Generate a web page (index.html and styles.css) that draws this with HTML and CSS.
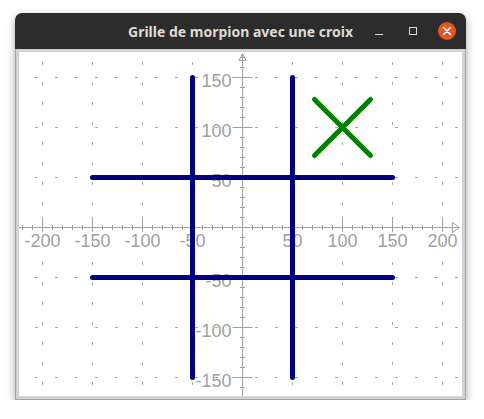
FILE: index.html
```html
<!DOCTYPE html>
<html>
<head>
<meta charset="utf-8">
<link rel="stylesheet" href="styles.css">
</head>
<body>
<div class="window">
  <div class="titlebar">
    <div class="spacer"></div>
    <div class="title">Grille de morpion avec une croix</div>
    <div class="controls">
      <span class="btn-min"></span>
      <span class="btn-max"></span>
      <span class="btn-close">
        <svg width="18" height="18" viewBox="0 0 18 18"><circle cx="9" cy="9" r="9" fill="#e95420"/><path d="M5.5 5.5 L12.5 12.5 M12.5 5.5 L5.5 12.5" stroke="#fff" stroke-width="1.6" stroke-linecap="round"/></svg>
      </span>
    </div>
  </div>
  <div class="frame">
    <div class="inner">
      <svg class="canvas" width="443" height="344" viewBox="19 52 443 344">
        <g class="grid" stroke="#a6a6a6" stroke-width="1" fill="none">
          <g stroke-dasharray="3 17">
            <line x1="35" y1="77.5" x2="462" y2="77.5"/>
            <line x1="35" y1="127.5" x2="462" y2="127.5"/>
            <line x1="35" y1="177.5" x2="462" y2="177.5"/>
            <line x1="35" y1="277.5" x2="462" y2="277.5"/>
            <line x1="35" y1="327.5" x2="462" y2="327.5"/>
            <line x1="35" y1="377.5" x2="462" y2="377.5"/>
            <line x1="42.5" y1="62" x2="42.5" y2="396"/>
            <line x1="92.5" y1="62" x2="92.5" y2="396"/>
            <line x1="142.5" y1="62" x2="142.5" y2="396"/>
            <line x1="192.5" y1="62" x2="192.5" y2="396"/>
            <line x1="292.5" y1="62" x2="292.5" y2="396"/>
            <line x1="342.5" y1="62" x2="342.5" y2="396"/>
            <line x1="392.5" y1="62" x2="392.5" y2="396"/>
            <line x1="442.5" y1="62" x2="442.5" y2="396"/>
          </g>
        </g>
        <g class="axes" stroke="#a0a0a0" stroke-width="1" fill="none">
          <line x1="19" y1="227.5" x2="459" y2="227.5"/>
          <line x1="242.5" y1="54" x2="242.5" y2="396"/>
          <polygon points="452.5,222.5 459.5,227.5 452.5,232.5"/>
          <polygon points="239,60.5 242.5,53.5 246,60.5"/>
          <path d="M22.5 225V230M32.5 225V230M52.5 225V230M62.5 225V230M72.5 225V230M82.5 225V230M102.5 225V230M112.5 225V230M122.5 225V230M132.5 225V230M152.5 225V230M162.5 225V230M172.5 225V230M182.5 225V230M202.5 225V230M212.5 225V230M222.5 225V230M232.5 225V230M252.5 225V230M262.5 225V230M272.5 225V230M282.5 225V230M302.5 225V230M312.5 225V230M322.5 225V230M332.5 225V230M352.5 225V230M362.5 225V230M372.5 225V230M382.5 225V230M402.5 225V230M412.5 225V230M422.5 225V230M432.5 225V230M452.5 225V230"/>
          <path d="M42.5 217V232M92.5 217V232M142.5 217V232M192.5 217V232M292.5 217V232M342.5 217V232M392.5 217V232M442.5 217V232"/>
          <path d="M240 57.5H245M240 67.5H245M240 87.5H245M240 97.5H245M240 107.5H245M240 117.5H245M240 137.5H245M240 147.5H245M240 157.5H245M240 167.5H245M240 187.5H245M240 197.5H245M240 207.5H245M240 217.5H245M240 237.5H245M240 247.5H245M240 257.5H245M240 267.5H245M240 287.5H245M240 297.5H245M240 307.5H245M240 317.5H245M240 337.5H245M240 347.5H245M240 357.5H245M240 367.5H245M240 387.5H245"/>
          <path d="M232.5 77.5H252.5M232.5 127.5H252.5M232.5 177.5H252.5M232.5 277.5H252.5M232.5 327.5H252.5M232.5 377.5H252.5"/>
        </g>
        <g class="labels" fill="#a0a0a0" font-family="Liberation Sans, Arial, sans-serif" font-size="18">
          <g text-anchor="middle">
            <text x="42.5" y="247">-200</text>
            <text x="92.5" y="247">-150</text>
            <text x="142.5" y="247">-100</text>
            <text x="192.5" y="247">-50</text>
            <text x="292.5" y="247">50</text>
            <text x="342.5" y="247">100</text>
            <text x="392.5" y="247">150</text>
            <text x="442.5" y="247">200</text>
          </g>
          <g text-anchor="end">
            <text x="231.5" y="87">150</text>
            <text x="231.5" y="137">100</text>
            <text x="231.5" y="187">50</text>
            <text x="231.5" y="287">-50</text>
            <text x="231.5" y="337">-100</text>
            <text x="231.5" y="387">-150</text>
          </g>
        </g>
        <g class="board" stroke="#000080" stroke-width="5" stroke-linecap="round">
          <line x1="192.5" y1="77.5" x2="192.5" y2="377.5"/>
          <line x1="292.5" y1="77.5" x2="292.5" y2="377.5"/>
          <line x1="92.5" y1="177.5" x2="392.5" y2="177.5"/>
          <line x1="92.5" y1="277.5" x2="392.5" y2="277.5"/>
        </g>
        <g class="cross" stroke="#008000" stroke-width="5" stroke-linecap="round">
          <line x1="314.5" y1="99.5" x2="370.5" y2="155.5"/>
          <line x1="370.5" y1="99.5" x2="314.5" y2="155.5"/>
        </g>
      </svg>
    </div>
  </div>
</div>
</body>
</html>
```

FILE: styles.css
```css
html, body {
  margin: 0;
  padding: 0;
  background: #ffffff;
}

.window {
  margin: 13px 0 0 15px;
  width: 451px;
  border-radius: 7px 7px 0 0;
  box-shadow: 0 3px 9px rgba(0, 0, 0, 0.35);
}

.titlebar {
  height: 36px;
  background: #2c2c2c;
  border-radius: 7px 7px 0 0;
  display: grid;
  grid-template-columns: 1fr auto 1fr;
  align-items: center;
}

.title {
  font-family: "Noto Sans", "DejaVu Sans", sans-serif;
  font-weight: bold;
  font-size: 14px;
  color: #dfdbd2;
  white-space: nowrap;
  padding-top: 1px;
}

.controls {
  display: flex;
  justify-content: flex-end;
  align-items: center;
  padding-right: 10px;
}

.btn-min {
  width: 8px;
  height: 1px;
  background: #dfdbd2;
  margin-top: 6px;
  margin-right: 26px;
}

.btn-max {
  width: 6px;
  height: 6px;
  border: 1px solid #dfdbd2;
  margin-right: 21px;
}

.btn-close {
  width: 18px;
  height: 18px;
  display: block;
}

.btn-close svg {
  display: block;
}

.frame {
  border: 1px solid #a3a3a3;
  border-top: none;
}

.inner {
  border: 3px solid #d2d2d2;
  background: #ffffff;
}

.canvas {
  display: block;
}
```
